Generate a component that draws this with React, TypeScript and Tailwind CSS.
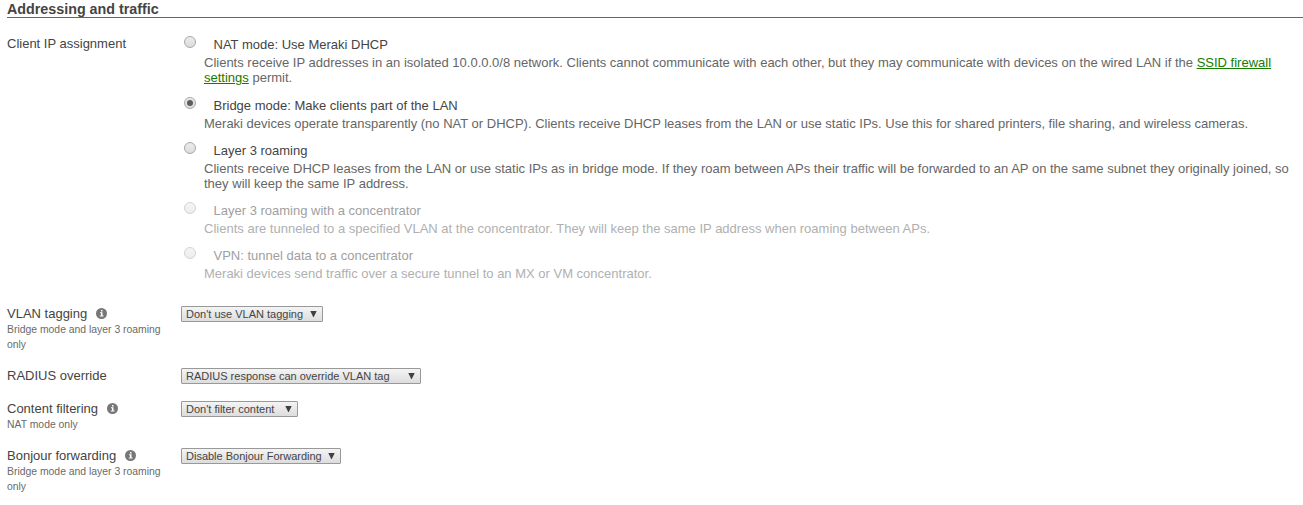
import React from 'react';

type Option = {
  title: string;
  body: React.ReactNode;
  spacing: string;
  tracking?: string;
  checked?: boolean;
  disabled?: boolean;
};

const options: Option[] = [
  {
    title: 'NAT mode: Use Meraki DHCP',
    spacing: 'mb-[13px]',
    body: (
      <>
        Clients receive IP addresses in an isolated 10.0.0.0/8 network. Clients cannot communicate with each other, but
        they may communicate with devices on the wired LAN if the{' '}
        <a href="#" className="text-[#177b00] underline">
          SSID firewall settings
        </a>{' '}
        permit.
      </>
    ),
  },
  {
    title: 'Bridge mode: Make clients part of the LAN',
    spacing: 'mb-3',
    checked: true,
    body: 'Meraki devices operate transparently (no NAT or DHCP). Clients receive DHCP leases from the LAN or use static IPs. Use this for shared printers, file sharing, and wireless cameras.',
  },
  {
    title: 'Layer 3 roaming',
    spacing: 'mb-3',
    tracking: 'tracking-[0.009px]',
    body: 'Clients receive DHCP leases from the LAN or use static IPs as in bridge mode. If they roam between APs their traffic will be forwarded to an AP on the same subnet they originally joined, so they will keep the same IP address.',
  },
  {
    title: 'Layer 3 roaming with a concentrator',
    spacing: 'mb-3',
    tracking: 'tracking-[0.008px]',
    disabled: true,
    body: 'Clients are tunneled to a specified VLAN at the concentrator. They will keep the same IP address when roaming between APs.',
  },
  {
    title: 'VPN: tunnel data to a concentrator',
    spacing: '',
    disabled: true,
    body: 'Meraki devices send traffic over a secure tunnel to an MX or VM concentrator.',
  },
];

function Radio({ checked, disabled }: { checked?: boolean; disabled?: boolean }) {
  return (
    <span
      role="radio"
      aria-checked={!!checked}
      className={`-mt-px ml-[3px] flex size-3 shrink-0 items-center justify-center rounded-full border border-[#a8a8a8] bg-linear-to-b from-[#ececec] to-[#dcdcdc] ${
        disabled ? 'opacity-50' : ''
      }`}
    >
      {checked && <span className="size-1.5 rounded-full bg-[#5c5c5c]" />}
    </span>
  );
}

function InfoIcon() {
  return (
    <svg width="11" height="11" viewBox="0 0 11 11" className="ml-[9px] shrink-0">
      <circle cx="5.5" cy="5.5" r="5.5" fill="#777" />
      <path d="M5 2h1.5v1.4H5zM4 4.2h2.5v3.3h1v1.1H3.8V7.5H5V5.3H4z" fill="#fff" />
    </svg>
  );
}

function Select({ value, width }: { value: string; width: string }) {
  return (
    <button
      className={`flex h-4 items-center justify-between rounded-[1px] border border-[#999] bg-linear-to-b from-[#f4f4f4] to-[#dddddd] pr-[5.5px] pl-1 text-[11px] leading-[14px] whitespace-nowrap text-[#444] ${width}`}
    >
      <span>{value}</span>
      <svg width="7" height="6" viewBox="0 0 7 6" className="mb-px">
        <path d="M0.3 0h6.4L3.8 6H3.2z" fill="#404040" />
      </svg>
    </button>
  );
}

function Row(props: { label: string; hint?: string; info?: boolean; value: string; width: string; height: string }) {
  return (
    <div className={`flex ${props.height}`}>
      <div className="w-[174px] shrink-0">
        <div className="flex items-center">
          {props.label}
          {props.info && <InfoIcon />}
        </div>
        {props.hint && <div className="w-[160px] pt-px text-[10.4px] text-[#6a6a6a]">{props.hint}</div>}
      </div>
      <Select value={props.value} width={props.width} />
    </div>
  );
}

export default function App() {
  return (
    <div className="h-[505px] overflow-hidden bg-white pl-[7px] font-['Liberation_Sans',Arial,sans-serif] text-[13px] leading-[15px] text-[#444]">
      <h2 className="h-[18px] border-b border-[#666] pt-px text-[14.3px] leading-4 font-bold">Addressing and traffic</h2>
      <div className="flex h-[288px] pt-[18px]">
        <div className="w-[174px] shrink-0">Client IP assignment</div>
        <div className="flex-1 pt-px" role="radiogroup">
          {options.map((o) => (
            <div key={o.title} className={o.spacing}>
              <div className="flex">
                <Radio checked={o.checked} disabled={o.disabled} />
                <span className={`ml-[17.5px] ${o.disabled ? 'text-[#a0a0a0]' : ''}`}>{o.title}</span>
              </div>
              <div
                className={`mt-[3px] ml-[23px] pr-2 ${o.tracking ?? ''} ${o.disabled ? 'text-[#b0b0b0]' : 'text-[#666]'}`}
              >
                {o.body}
              </div>
            </div>
          ))}
        </div>
      </div>
      <Row label="VLAN tagging" info hint="Bridge mode and layer 3 roaming only" value="Don't use VLAN tagging" width="w-[142px]" height="h-[62px]" />
      <Row label="RADIUS override" value="RADIUS response can override VLAN tag" width="w-[240px]" height="h-[33px]" />
      <Row label="Content filtering" info hint="NAT mode only" value="Don't filter content" width="w-[117px]" height="h-[47px]" />
      <Row label="Bonjour forwarding" info hint="Bridge mode and layer 3 roaming only" value="Disable Bonjour Forwarding" width="w-[160px]" height="h-[57px]" />
    </div>
  );
}
